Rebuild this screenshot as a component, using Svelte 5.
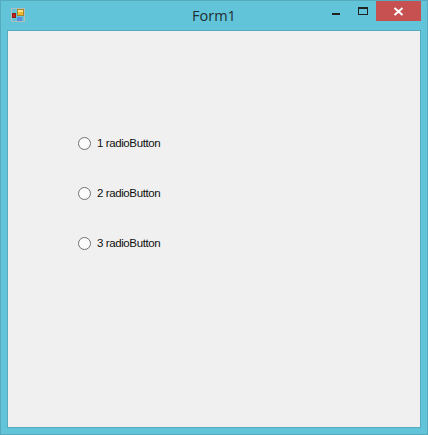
<script>
  const radios = ["1 radioButton", "2 radioButton", "3 radioButton"];
</script>

<div class="window">
  <div class="titlebar">
    <svg class="app-icon" width="14" height="14" viewBox="0 0 14 14">
      <rect x="0.5" y="0.5" width="13" height="13" fill="none" stroke="#b4bcbc" />
      <rect x="6.5" y="1.5" width="6" height="6" fill="#eeb82c" stroke="#a8862c" />
      <rect x="7" y="2" width="5" height="2" fill="#fbe58c" />
      <rect x="1.5" y="5.5" width="3" height="4" fill="#c8201c" stroke="#8c1c18" />
      <rect x="6" y="9" width="5" height="4" fill="#5c8ce0" />
    </svg>
    <div class="title">Form1</div>
    <div class="controls">
      <div class="ctl min"><span></span></div>
      <div class="ctl max"><span></span></div>
      <div class="ctl close">
        <svg width="11" height="9" viewBox="0 0 11 9">
          <path d="M1.5 1 L9.5 8 M9.5 1 L1.5 8" stroke="#fff" stroke-width="2" fill="none" />
        </svg>
      </div>
    </div>
  </div>
  <div class="client">
    {#each radios as label}
      <label class="radio">
        <span class="dot"></span>
        <span class="text">{label}</span>
      </label>
    {/each}
  </div>
</div>

<style>
  :global(body) {
    margin: 0;
  }
  .window {
    width: 428px;
    height: 435px;
    box-sizing: border-box;
    display: flex;
    flex-direction: column;
    background: #62c4d8;
    border: 1px solid #57a9bd;
    padding: 0 6px 6px 6px;
  }
  .titlebar {
    height: 29px;
    flex: none;
    position: relative;
    display: flex;
    align-items: flex-start;
    justify-content: center;
  }
  .app-icon {
    position: absolute;
    left: 4px;
    top: 7px;
  }
  .title {
    font-family: "Open Sans", "Noto Sans", sans-serif;
    font-size: 14.5px;
    line-height: 20px;
    margin-top: 5px;
    color: #1f2d33;
  }
  .controls {
    position: absolute;
    right: 0;
    top: 0;
    display: flex;
  }
  .ctl {
    height: 20px;
    width: 27px;
    display: flex;
    align-items: center;
    justify-content: center;
  }
  .min span {
    width: 8px;
    height: 2px;
    margin-top: 6px;
    background: #222;
  }
  .max span {
    width: 8px;
    height: 5px;
    border: 1px solid #222;
    border-top-width: 2px;
  }
  .close {
    width: 45px;
    background: #c75050;
  }
  .client {
    flex: 1;
    box-sizing: border-box;
    background: #f0f0f0;
    border: 1px solid #57a9bd;
    padding-top: 105px;
    padding-left: 70px;
    display: flex;
    flex-direction: column;
    gap: 36px;
  }
  .radio {
    display: flex;
    align-items: center;
    height: 14px;
  }
  .dot {
    width: 11px;
    height: 11px;
    flex: none;
    border: 1px solid #707070;
    border-radius: 50%;
    background: #fcfcfc;
    margin-right: 6px;
  }
  .text {
    font-family: "Liberation Sans", Arial, sans-serif;
    font-size: 11.5px;
    letter-spacing: -0.4px;
    color: #111;
  }
</style>
